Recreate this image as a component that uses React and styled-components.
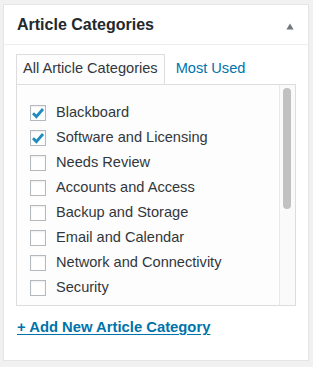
import React from "react";
import styled, { createGlobalStyle } from "styled-components";

const GlobalStyle = createGlobalStyle`
  html, body {
    margin: 0;
    padding: 0;
    background: #f1f1f1;
  }
  body {
    font-family: "Liberation Sans", Arial, sans-serif;
    -webkit-font-smoothing: antialiased;
  }
  * { box-sizing: border-box; }
`;

const Page = styled.div`
  padding: 4px 0 0 3px;
`;

const Card = styled.section`
  width: 306px;
  height: 357px;
  background: #fff;
  border: 1px solid #e5e5e5;
  box-shadow: 0 1px 1px rgba(0, 0, 0, 0.04);
  display: flex;
  flex-direction: column;
`;

const Header = styled.header`
  height: 40px;
  border-bottom: 1px solid #eee;
  display: flex;
  align-items: center;
  justify-content: space-between;
  padding: 0 14px 0 13px;
`;

const Title = styled.h2`
  margin: 0;
  font-size: 16px;
  font-weight: 700;
  color: #23282d;
  line-height: 20px;
`;

const Toggle = styled.button`
  border: 0;
  background: none;
  padding: 0;
  width: 8px;
  height: 8px;
  margin-top: 3px;
  display: flex;
  align-items: center;
  justify-content: center;
  cursor: pointer;
`;

const Inside = styled.div`
  padding: 9px 12px 0 12px;
  display: flex;
  flex-direction: column;
`;

const Tabs = styled.ul`
  list-style: none;
  margin: 0;
  padding: 0;
  display: flex;
  height: 30px;
`;

const Tab = styled.li`
  height: 30px;
  padding: 3px 6px 0 6px;
  margin-left: ${(p) => (p.$active ? 0 : 4)}px;
  line-height: 20px;
  font-size: 14.6px;
  color: ${(p) => (p.$active ? "#32373c" : "#0073aa")};
  background: ${(p) => (p.$active ? "#fdfdfd" : "transparent")};
  border: 1px solid ${(p) => (p.$active ? "#ddd" : "transparent")};
  border-bottom: 0;
  white-space: nowrap;
`;

const Panel = styled.div`
  height: 222px;
  border: 1px solid #ddd;
  background: #fdfdfd;
  display: flex;
  overflow: hidden;
`;

const List = styled.ul`
  list-style: none;
  margin: 0;
  padding: 15px 0 0 13px;
  flex: 1;
  overflow: hidden;
`;

const Row = styled.li`
  height: 25px;
  display: flex;
  align-items: center;
  gap: 10px;
  font-size: 14.6px;
  line-height: 25px;
  color: #32373c;
  white-space: nowrap;
`;

const Box = styled.span`
  width: 16px;
  height: 16px;
  flex: none;
  border: 1px solid #b4b9be;
  background: #fff;
  box-shadow: inset 0 1px 2px rgba(0, 0, 0, 0.07);
  display: flex;
  align-items: center;
  justify-content: center;
`;

const Track = styled.div`
  width: 16px;
  flex: none;
  border-left: 1px solid #e8e8e8;
  background: #fafafa;
  padding: 3px 0 0 3px;
`;

const Thumb = styled.div`
  width: 8px;
  height: 121px;
  border-radius: 4px;
  background: #c1c1c1;
`;

const AddLink = styled.a`
  margin-top: 11px;
  margin-left: 1px;
  font-size: 14.8px;
  font-weight: 700;
  line-height: 20px;
  color: #0073aa;
  text-decoration: underline;
  text-underline-offset: 2px;
  align-self: flex-start;
`;

const Check = () => (
  <svg width="14" height="14" viewBox="0 0 14 14">
    <path
      d="M2 7.2 L5.4 10.6 L12 3"
      fill="none"
      stroke="#1e8cbe"
      strokeWidth="2.8"
      strokeLinecap="butt"
      strokeLinejoin="miter"
    />
  </svg>
);

const items = [
  { label: "Blackboard", checked: true },
  { label: "Software and Licensing", checked: true },
  { label: "Needs Review" },
  { label: "Accounts and Access" },
  { label: "Backup and Storage" },
  { label: "Email and Calendar" },
  { label: "Network and Connectivity" },
  { label: "Security" },
  { label: "" },
];

export default function App() {
  return (
    <Page>
      <GlobalStyle />
      <Card>
        <Header>
          <Title>Article Categories</Title>
          <Toggle aria-label="Toggle panel">
            <svg width="8" height="7" viewBox="0 0 8 7">
              <polygon points="4,0.5 7.6,6.5 0.4,6.5" fill="#72777c" />
            </svg>
          </Toggle>
        </Header>
        <Inside>
          <Tabs>
            <Tab $active>All Article Categories</Tab>
            <Tab>Most Used</Tab>
          </Tabs>
          <Panel>
            <List>
              {items.map((it, i) => (
                <Row key={i}>
                  <Box>{it.checked && <Check />}</Box>
                  {it.label}
                </Row>
              ))}
            </List>
            <Track>
              <Thumb />
            </Track>
          </Panel>
          <AddLink href="#">+ Add New Article Category</AddLink>
        </Inside>
      </Card>
    </Page>
  );
}
